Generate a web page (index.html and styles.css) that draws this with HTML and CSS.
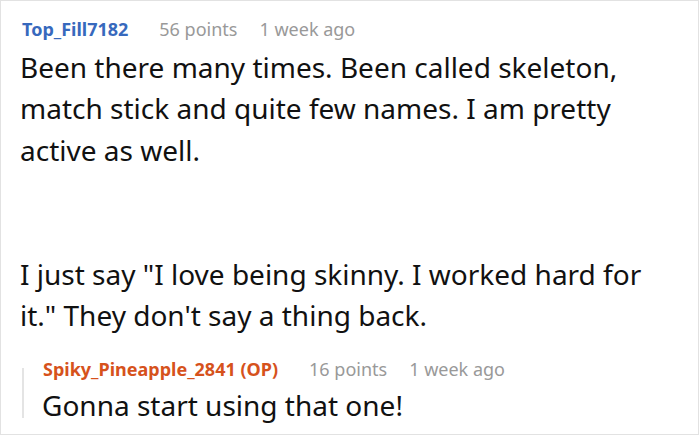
FILE: index.html
```
<!DOCTYPE html>
<html>
<head>
<meta charset="utf-8">
<link rel="stylesheet" href="styles.css">
</head>
<body>
<div class="card">
  <div class="comment">
    <div class="meta">
      <span class="author">Top_Fill7182</span>
      <span class="info">56 points</span>
      <span class="info">1 week ago</span>
    </div>
    <div class="body">
      <p>Been there many times. Been called skeleton, match stick and quite few names. I am pretty active as well.</p>
      <p>I just say "I love being skinny. I worked hard for it." They don't say a thing back.</p>
    </div>
  </div>
  <div class="reply">
    <div class="meta">
      <span class="author op">Spiky_Pineapple_2841 (OP)</span>
      <span class="info">16 points</span>
      <span class="info">1 week ago</span>
    </div>
    <div class="body">
      <p>Gonna start using that one!</p>
    </div>
  </div>
</div>
</body>
</html>
```
FILE: styles.css
```
html, body {
  margin: 0;
  padding: 0;
  background: #fff;
}
.card {
  box-sizing: border-box;
  width: 699px;
  height: 435px;
  border: 1px solid #e2e2e2;
  padding: 16px 0 0 21px;
  font-family: "Noto Sans", "Open Sans", sans-serif;
  color: #111;
  overflow: hidden;
}
.meta {
  display: flex;
  gap: 22px;
  font-size: 18px;
  line-height: 24px;
  white-space: nowrap;
}
.author {
  font-weight: 700;
  color: #3769bd;
  margin-right: 9px;
}
.author.op {
  color: #d6521c;
}
.info {
  color: #999;
}
.body {
  margin-top: 6px;
}
.comment .body {
  margin-left: -2px;
  width: 650px;
}
.body p {
  margin: 0;
  font-size: 28px;
  line-height: 41.4px;
}
.comment .body p + p {
  margin-top: 82.8px;
}
.reply {
  position: relative;
  margin-top: 20px;
  padding-left: 21px;
}
.reply::before {
  content: "";
  position: absolute;
  left: 0;
  top: 11px;
  width: 2px;
  height: 50px;
  background: #e4e4e4;
}
.reply .body {
  margin-top: 4px;
  margin-left: -1px;
}
```
